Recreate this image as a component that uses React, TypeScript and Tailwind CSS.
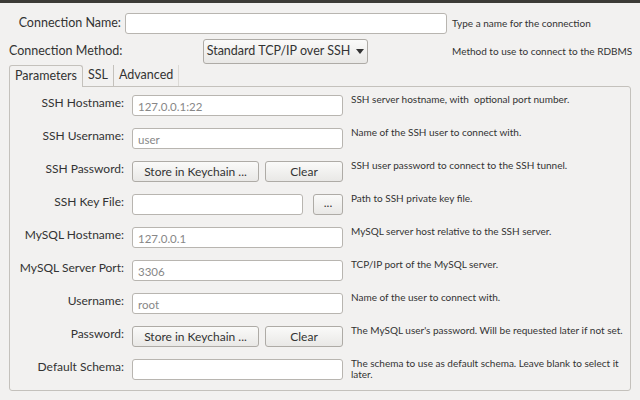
const font = { fontFamily: 'Lato, "Noto Sans", sans-serif' };

type Row = {
  label: string;
  kind: "input" | "keychain" | "file";
  value?: string;
  hint: string;
};

const rows: Row[] = [
  { label: "SSH Hostname:", kind: "input", value: "127.0.0.1:22", hint: "SSH server hostname, with  optional port number." },
  { label: "SSH Username:", kind: "input", value: "user", hint: "Name of the SSH user to connect with." },
  { label: "SSH Password:", kind: "keychain", hint: "SSH user password to connect to the SSH tunnel." },
  { label: "SSH Key File:", kind: "file", hint: "Path to SSH private key file." },
  { label: "MySQL Hostname:", kind: "input", value: "127.0.0.1", hint: "MySQL server host relative to the SSH server." },
  { label: "MySQL Server Port:", kind: "input", value: "3306", hint: "TCP/IP port of the MySQL server." },
  { label: "Username:", kind: "input", value: "root", hint: "Name of the user to connect with." },
  { label: "Password:", kind: "keychain", hint: "The MySQL user's password. Will be requested later if not set." },
  { label: "Default Schema:", kind: "input", value: "", hint: "The schema to use as default schema. Leave blank to select it later." },
];

const inputCls =
  "h-[21px] rounded-[3px] border border-[#b8b5b0] bg-white px-[5px] text-[11.5px] leading-[21px] text-[#878787] whitespace-pre";
const btnCls =
  "h-[21px] rounded-[3px] border border-[#aeaba6] bg-gradient-to-b from-[#fafaf9] to-[#e9e8e6] text-[12px] text-[#333] flex items-center justify-center";

function Field({ row }: { row: Row }) {
  if (row.kind === "keychain") {
    return (
      <div className="flex w-[211px] gap-[6px]">
        <div className={btnCls + " w-[127px]"}>Store in Keychain ...</div>
        <div className={btnCls + " w-[78px]"}>Clear</div>
      </div>
    );
  }
  if (row.kind === "file") {
    return (
      <div className="flex w-[211px] gap-[10px]">
        <div className={inputCls + " w-[171px]"}></div>
        <div className={btnCls + " w-[30px] pb-[3px] text-[10px]"}>...</div>
      </div>
    );
  }
  return <div className={inputCls + " w-[211px]"}>{row.value}</div>;
}

export default function App() {
  return (
    <div
      className="w-[640px] h-[400px] overflow-hidden bg-[#f2f1f0] border-t-[3px] border-[#3c3b37] text-[#333]"
      style={font}
    >
      {/* connection name */}
      <div className="flex items-center pt-[10px]">
        <div className="w-[121px] shrink-0 whitespace-nowrap text-right text-[12.5px]">Connection Name:</div>
        <div className="ml-[4px] h-[21px] w-[322px] shrink-0 rounded-[3px] border border-[#b8b5b0] bg-white"></div>
        <div className="ml-[5px] whitespace-nowrap text-[10px]">Type a name for the connection</div>
      </div>

      {/* connection method */}
      <div className="mt-[5px] flex h-[25px] items-center">
        <div className="ml-[9px] w-[194px] shrink-0 whitespace-nowrap text-[12.5px]">Connection Method:</div>
        <div className="flex h-[25px] w-[165px] shrink-0 items-center justify-center gap-[6px] whitespace-nowrap rounded-[3px] border border-[#aeaba6] bg-gradient-to-b from-[#fafaf9] to-[#e9e8e6] text-[12.5px]">
          <span>Standard TCP/IP over SSH</span>
          <svg width="8" height="5" viewBox="0 0 8 5">
            <path d="M0 0h8L4 5z" fill="#333" />
          </svg>
        </div>
        <div className="ml-[84px] whitespace-nowrap text-[10px]">Method to use to connect to the RDBMS</div>
      </div>

      {/* tabs */}
      <div className="ml-[9px] flex h-[22px] items-end text-[12.5px]">
        <div className="relative z-10 -mb-px flex h-[22px] items-center rounded-t-[3px] border border-b-0 border-[#c4c1bc] bg-[#f2f1f0] px-[5px]">
          Parameters
        </div>
        <div className="flex h-[21px] items-center border-r border-[#c4c1bc] px-[5px]">SSL</div>
        <div className="flex h-[21px] items-center border-r border-[#dcdad6] px-[5px]">Advanced</div>
      </div>

      {/* panel */}
      <div className="ml-[9px] flex h-[305px] w-[622px] flex-col gap-[12px] rounded-b-[3px] rounded-tr-[3px] border border-[#c4c1bc] pt-[8px]">
        {rows.map((row) => (
          <div key={row.label} className="flex h-[21px] items-start">
            <div className="mt-[-1px] w-[114px] shrink-0 whitespace-nowrap text-right text-[12px]">{row.label}</div>
            <div className="ml-[8px] shrink-0">
              <Field row={row} />
            </div>
            <div className="ml-[8px] mt-[-1px] w-[272px] whitespace-pre-wrap text-[10px] leading-[11px]">{row.hint}</div>
          </div>
        ))}
      </div>
    </div>
  );
}
